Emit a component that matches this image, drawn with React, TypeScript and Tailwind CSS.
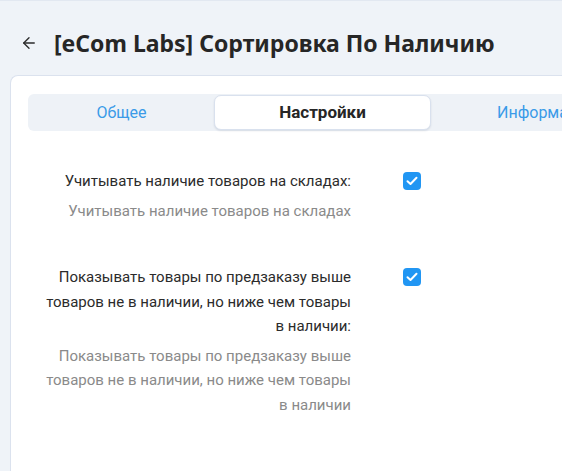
import React from "react";
import { ArrowLeft } from "lucide-react";

const font = { fontFamily: 'Roboto, "Noto Sans", sans-serif' };

const Check: React.FC = () => (
  <span className="w-[18px] h-[18px] rounded-[4px] bg-[#2196f3] grid place-content-center">
    <svg width="12" height="10" viewBox="0 0 12 10" fill="none">
      <path d="M1.5 5.2 4.5 8 10.5 1.8" stroke="white" strokeWidth="2" strokeLinecap="round" strokeLinejoin="round" />
    </svg>
  </span>
);

const SettingRow: React.FC<{ label: string; hint: string }> = ({ label, hint }) => (
  <div className="flex items-start">
    <div className="w-[316px] text-right">
      <p className="text-[15px] leading-[24.5px] text-[#2b2b2b]">{label}</p>
      <p className="mt-[5px] text-[15px] leading-[24.5px] text-[#8a8a8a]">{hint}</p>
    </div>
    <div className="ml-[52px] pt-[3px]">
      <Check />
    </div>
  </div>
);

export default function App() {
  return (
    <div className="w-[562px] h-[471px] overflow-hidden bg-[#eff3f8] border-t border-[#e2e8f1]" style={font}>
      <div className="flex items-center h-[74px] pl-[20px] pt-[10px]">
        <ArrowLeft size={18} strokeWidth={1.8} className="text-[#2b2b2b]" />
        <h1
          className="ml-[16px] text-[23px] font-bold text-[#262626] whitespace-nowrap"
          style={{ fontFamily: '"Noto Sans", sans-serif' }}
        >
          [eCom Labs] Сортировка По Наличию
        </h1>
      </div>
      <div className="ml-[10px] w-[600px] h-[420px] bg-white rounded-tl-[8px] border-l border-t border-[#dbe2ee] pl-[17px] pt-[18px]">
        <div className="flex h-[37px] w-[600px] bg-[#eef2f7] rounded-[6px] p-px">
          <div className="w-[185px] grid place-content-center text-[16px] text-[#3a9be8]">Общее</div>
          <div className="w-[217px] grid place-content-center text-[17px] font-bold text-[#262626] bg-white rounded-[7px] border border-[#d9e1ee] shadow-[0_1px_2px_rgba(30,50,90,0.12)]">
            Настройки
          </div>
          <div className="flex items-center pl-[66px] text-[16px] text-[#3a9be8] whitespace-nowrap">Информация</div>
        </div>
        <div className="flex flex-col gap-[42px] pt-[38px] pl-[7px]">
          <SettingRow
            label="Учитывать наличие товаров на складах:"
            hint="Учитывать наличие товаров на складах"
          />
          <SettingRow
            label="Показывать товары по предзаказу выше товаров не в наличии, но ниже чем товары в наличии:"
            hint="Показывать товары по предзаказу выше товаров не в наличии, но ниже чем товары в наличии"
          />
        </div>
      </div>
    </div>
  );
}
